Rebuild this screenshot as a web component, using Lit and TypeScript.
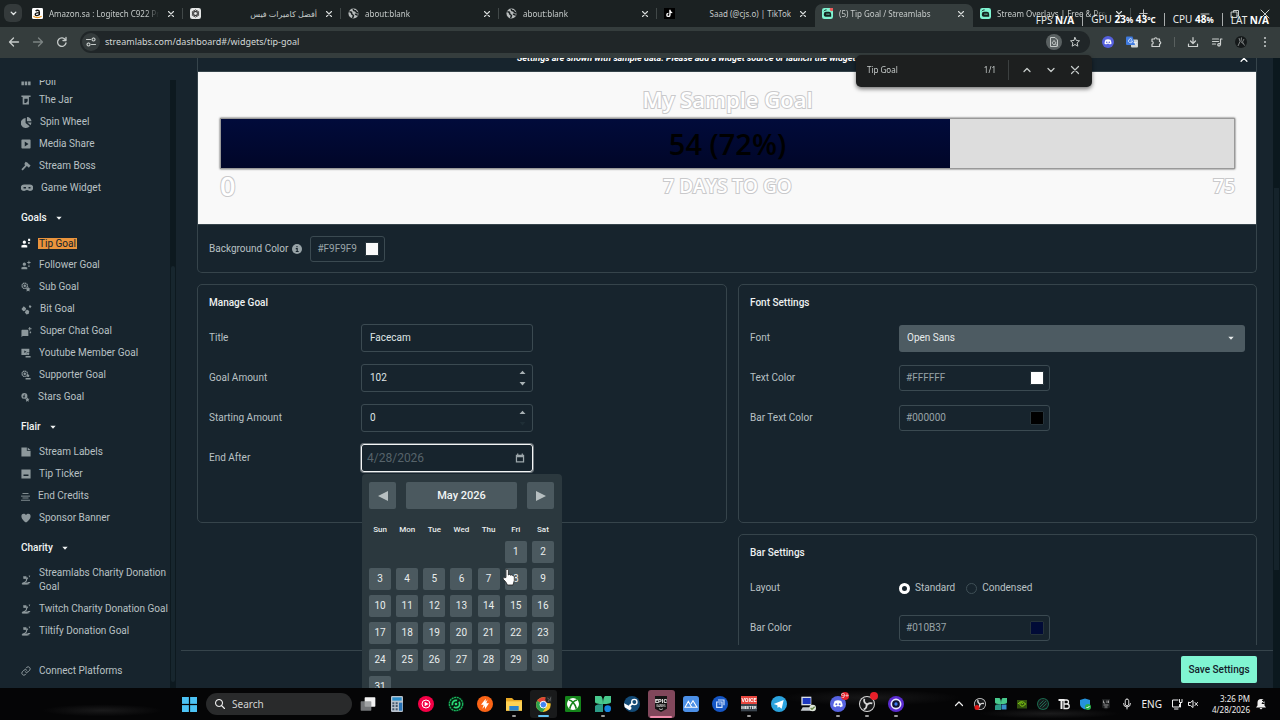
import { LitElement, html, svg, css, nothing } from "lit";
import { customElement } from "lit/decorators.js";
import { classMap } from "lit/directives/class-map.js";
import { styleMap } from "lit/directives/style-map.js";

const icon = (body: unknown, w = 12, h = w, box = 24) =>
  html`<svg class="ic" width=${w} height=${h} viewBox="0 0 ${box} ${(box * h) / w}" aria-hidden="true">${body}</svg>`;

const line = (d: string, width = 2) =>
  svg`<path d=${d} fill="none" stroke="currentColor" stroke-width=${width} stroke-linecap="round" stroke-linejoin="round"/>`;
const solid = (d: string) => svg`<path d=${d} fill="currentColor"/>`;

const closeGlyph = line("M6 6 18 18M18 6 6 18", 2.6);

const base = css`
  :host, * { box-sizing: border-box; }
  button, input, select { font: inherit; color: inherit; margin: 0; padding: 0; border: 0; background: none; min-width: 0; outline: 0; }
  button { display: grid; place-items: center; cursor: pointer; }
  a { color: inherit; text-decoration: none; }
  .ic { display: block; flex: none; }
`;

/* ---------- browser tabs, toolbar and find bar ---------- */

const globe = svg`<circle cx="12" cy="12" r="11" fill="#b9bdbd"/><path d="M3 8c4 0 5 1 5 4s3 2 4 5l-2 5M12 2c-1 3 1 4 4 4 2 1 1 4 4 4 2 1 3 0 3 0M15 14c3-1 5 0 5 3" fill="none" stroke="#1c2223" stroke-width="3.4"/>`;
const streamlabs = svg`<rect width="24" height="24" rx="5" fill="#80f5d2"/><path d="M9 8h6a5 5 0 0 1 5 5v6H8a4 4 0 0 1-4-4v-2a5 5 0 0 1 5-5Z" fill="#14231f"/><path d="M4 7c1-2 3-3 6-3" stroke="#14231f" stroke-width="2" fill="none"/><path d="M11 12v3M15 12v3" stroke="#80f5d2" stroke-width="2"/>`;

const tabs = [
  { title: "Amazon.sa : Logitech C922 Pro", fav: svg`<rect width="24" height="24" rx="3" fill="#fff"/><path d="M8 7c2-3 8-3 8 2v7M16 10c-6 0-9 1-9 4s6 4 9 0" fill="none" stroke="#111" stroke-width="3"/><path d="M3 18c6 4 12 4 18 0" fill="none" stroke="#f09a20" stroke-width="2.6"/>` },
  { title: "أفضل كاميرات فيس", rtl: true, fav: svg`<rect width="24" height="24" rx="5" fill="#e4e6e6"/><g fill="none" stroke="#222" stroke-width="1.5"><ellipse cx="12" cy="12" rx="4" ry="8"/><ellipse cx="12" cy="12" rx="4" ry="8" transform="rotate(60 12 12)"/><ellipse cx="12" cy="12" rx="4" ry="8" transform="rotate(120 12 12)"/></g>` },
  { title: "about:blank", fav: globe },
  { title: "about:blank", fav: globe },
  { title: "Saad (@cjs.o) | TikTok", end: true, fav: svg`<rect width="24" height="24" fill="#000"/><path d="M13 4v11a3.4 3.4 0 1 1-3.400-3.400M13 5c0 3 2 5 5 5" fill="none" stroke="#fff" stroke-width="3"/>` },
  { title: "(5) Tip Goal / Streamlabs", active: true, fav: svg`${streamlabs}<circle cx="21" cy="3" r="4" fill="#ee5b5b"/>` },
  { title: "Stream Overlays | Free & Premium", fav: streamlabs },
];

@customElement("browser-frame")
class BrowserFrame extends LitElement {
  static styles = [base, css`
    :host { display: block; position: relative; z-index: 10; color: #c6cbca; font: 8px/14px "Noto Sans", "DejaVu Sans", sans-serif; }
    .strip { display: flex; height: 27px; background: #1b2122; align-items: stretch; }
    .search-tabs { width: 18px; height: 18px; margin: 4px 3px 0 4px; border-radius: 6px; background: #343a3b; color: #e3e6e6; }
    .tab { flex: 0 1 158px; min-width: 0; display: flex; align-items: center; gap: 6px; padding: 0 6px 0 7px; position: relative; }
    .tab::after { content: ""; position: absolute; right: 0; top: 8px; height: 11px; width: 1px; background: #414848; }
    .tab.active { background: #353d3d; border-radius: 7px 7px 0 0; margin-top: 4px; padding-bottom: 4px; }
    .tab.active::after, .tab.quiet::after { display: none; }
    .name { flex: 1; overflow: hidden; white-space: nowrap; text-align: left; display: block; mask-image: linear-gradient(90deg, #000 88%, transparent); }
    .name.end { text-align: right; mask-image: none; }
    .x { width: 12px; height: 12px; color: #d8dcdb; }
    .plus { width: 24px; }
    .win { display: flex; margin-left: auto; gap: 18px; padding-right: 9px; align-items: center; }
    .bar { display: flex; align-items: center; height: 31px; background: #353d3d; padding: 0 9px 2px 8px; }
    .nav { display: flex; gap: 12px; margin-right: 12px; }
    .dim { color: #7c8483; }
    .omni { flex: 1; display: flex; align-items: center; height: 22px; border-radius: 11px; background: #202628; padding: 0 9px 0 2px; gap: 5px; }
    .info { width: 18px; height: 18px; border-radius: 9px; background: #343b3c; }
    .omni input { flex: 1; font-size: 9px; color: #d3d8d7; }
    .lens { width: 16px; height: 16px; border-radius: 8px; background: #5a6162; margin-right: 2px; }
    .tools { display: flex; align-items: center; gap: 12px; padding-left: 12px; color: #cdd1d0; }
    .rule { width: 1px; height: 10px; background: #59605f; }
    .find { position: absolute; right: 188px; top: 55px; width: 236px; height: 32px; display: flex; align-items: center; gap: 12px; padding: 0 11px 2px; border-radius: 5px; background: #1d1f1f; box-shadow: 0 2px 4px #0008; }
    .find input { flex: 1; }
    .find .sep { width: 1px; height: 20px; background: #3c4040; }
    .perf { position: absolute; top: 11px; right: 11px; display: flex; align-items: center; gap: 8px; font: 10px/16px "Noto Sans", sans-serif; color: #e9eceb; pointer-events: none; }
    .perf b { color: #fff; font-weight: 700; }
    .perf small { font-size: 8px; }
    .perf i { width: 1px; height: 13px; background: #a9adad; }
  `];
  render() {
    return html`
      <div class="strip">
        <button class="search-tabs" aria-label="Search tabs">${icon(line("M7 9l5 5 5-5", 3), 11)}</button>
        ${tabs.map((t, i) => html`
          <div class=${classMap({ tab: true, active: !!t.active, quiet: i === 4 })}>
            ${icon(t.fav, 11)}
            <button class=${classMap({ name: true, end: !!(t.end || t.rtl) })} dir=${t.rtl ? "auto" : nothing} title=${t.title}>${t.title}</button>
            <button class="x" aria-label="Close tab">${icon(closeGlyph, 10)}</button>
          </div>`)}
        <button class="plus" aria-label="New tab">${icon(line("M12 4v16M4 12h16"), 11)}</button>
        <div class="win">
          <button aria-label="Minimize">${icon(line("M4 12h16"), 12)}</button>
          <button aria-label="Restore">${icon(line("M5 8h11v11H5zM9 8V5h10v11h-3"), 12)}</button>
          <button aria-label="Close">${icon(line("M4 4 20 20M20 4 4 20"), 12)}</button>
        </div>
      </div>
      <div class="bar">
        <div class="nav">
          <button aria-label="Back">${icon(line("M21 12H4M11 4l-8 8 8 8", 2.6), 12)}</button>
          <button class="dim" aria-label="Forward">${icon(line("M3 12h17M13 4l8 8-8 8", 2.6), 12)}</button>
          <button aria-label="Reload">${icon(line("M19 8a8.500 8.500 0 1 0 1 6M20 3v6h-6", 2.6), 12)}</button>
        </div>
        <div class="omni">
          <button class="info" aria-label="Site information">${icon(line("M3 7h8M13 17h8M17 4a3 3 0 1 0 .1 0M7 14a3 3 0 1 0 .1 0", 2.4), 12)}</button>
          <input aria-label="Address" value="streamlabs.com/dashboard#/widgets/tip-goal">
          <button class="lens" aria-label="Find in page">${icon(line("M17 21H5V3h9l5 5v12M12 10a3.500 3.500 0 1 0 .1 0M15 16l4 4"), 12)}</button>
          <button aria-label="Bookmark">${icon(line("M12 3l2.700 6 6.300.6-4.800 4.300 1.500 6.500L12 17l-5.700 3.400 1.500-6.500L3 9.600 9.300 9z"), 12)}</button>
        </div>
        <div class="tools">
          ${icon(svg`<circle cx="12" cy="12" r="12" fill="#5560dd"/><path d="M7 7.500q5-2 10 0 2 4 2 8l-3.500 1.500-1-1.500h-5L8.500 17 5 15.500q0-4 2-8" fill="#fff"/><circle cx="9.500" cy="12.500" r="1.500" fill="#5560dd"/><circle cx="14.500" cy="12.500" r="1.500" fill="#5560dd"/>`, 12)}
          ${icon(svg`<rect x="10" y="7" width="14" height="16" rx="2" fill="#cfd4d4"/><path d="M0 3q0-2 2-2h11l5 17H2q-2 0-2-2z" fill="#3f7be0"/><path d="M12 7a4 4 0 1 0 1 3H9M15 13h7M18 12c1 4 2 6 4 7" fill="none" stroke="#e8f0ff" stroke-width="1.600"/>`, 12)}
          ${icon(line("M5 6h4a2.500 2.500 0 0 1 5 0h5v5a2.500 2.500 0 0 1 0 5v5H4v-5a2.500 2.500 0 0 0 0-5V6z", 2.400), 12)}
          <span class="rule"></span>
          ${icon(line("M12 3v12M7 10l5 5 5-5M3 16v5h18v-5", 2.400), 12)}
          ${icon(line("M3 6h12M3 11h12M3 16h6M19 17V6h3M16 15a2.500 2.500 0 1 0 .1 0", 2.400), 12)}
          ${icon(svg`<circle cx="12" cy="12" r="12" fill="#15191a"/><path d="M8 4l2 7-4 9M13 3l-1 8 3 4M18 6l-3 6 4 7" stroke="#8a8f8e" stroke-width="1.800" fill="none"/>`, 12)}
          ${icon(svg`<g fill="currentColor"><circle cx="12" cy="4" r="2"/><circle cx="12" cy="12" r="2"/><circle cx="12" cy="20" r="2"/></g>`, 12)}
        </div>
      </div>
      <div class="perf"><span>FPS <b>N/A</b></span><i></i><span>GPU <b>23<small>%</small> 43<small>°C</small></b></span><i></i><span>CPU <b>48<small>%</small></b></span><i></i><span>LAT <b>N/A</b></span></div>
      <div class="find" role="search">
        <input aria-label="Find" value="Tip Goal"><span>1/1</span><span class="sep"></span>
        <button aria-label="Previous match">${icon(line("M6 15l6-6 6 6", 2.600), 12)}</button>
        <button aria-label="Next match">${icon(line("M6 9l6 6 6-6", 2.600), 12)}</button>
        <button aria-label="Close find bar">${icon(line("M5 5 19 19M19 5 5 19", 2.400), 12)}</button>
      </div>`;
  }
}

/* ---------- widget navigation ---------- */

const charityArt = svg`${line("M6 7h10l-3 4v3M4 20c4 0 5-3 8-5M3 21h16M17 18h4", 2.600)}${solid("M5 3h8v6H7zM18 2l4-1-1 5zM4 18h12v5H3z")}`;
const supporterArt = svg`<circle cx="9" cy="9" r="6.500" fill="none" stroke="currentColor" stroke-width="3" stroke-dasharray="4 1"/><circle cx="9" cy="9" r="3" fill="currentColor"/>`;
const star = "M17 11l1.800 4 4.200.5-3 3 .8 4.500-3.800-2-3.800 2 .8-4.500-3-3 4.200-.5z";
const bust = "M17 11a3 3 0 1 1 0 6 3 3 0 0 1 0-6M11 23v-4h12v4z";

type Item = { label: string; art: unknown; w?: number; on?: boolean };
const widgets: Item[] = [
  { label: "The Jar", art: solid("M1 1h22v4h-4v18H4V5H1zM8 9v10h4l4-4V9z") },
  { label: "Spin Wheel", w: 11, art: solid("M10 2v11l9 7A11 11 0 1 1 10 2zM13 0c6 0 9 4 10 9H13zM14 12h9l-2 6z") },
  { label: "Media Share", art: svg`<path fill-rule="evenodd" fill="currentColor" d="M3 1h18q2 0 2 2v18q0 2-2 2H3q-2 0-2-2V3q0-2 2-2zm6 5v12l9-6z"/>` },
  { label: "Stream Boss", art: solid("M11 2l5 2 3 4 4 2-4 6-5-4L4 23l-3-3 9-10-2-3z") },
  { label: "Game Widget", w: 12, art: svg`<path fill-rule="evenodd" fill="currentColor" d="M6 5h12a6 6 0 0 1 0 13c-3 0-3-2-6-2s-3 2-6 2A6 6 0 0 1 6 5zm-1 5v3h5v-3zm10 0v3h4v-3z"/>` },
];
const goals: Item[] = [
  { label: "Tip Goal", on: true, art: solid("M8 6a4 4 0 1 1 0 8 4 4 0 0 1 0-8M1 23v-5q7-4 14 0v5zM17 2h5v5h-5zM17 10h4v4h-4z") },
  { label: "Follower Goal", art: solid("M8 6a4 4 0 1 1 0 8 4 4 0 0 1 0-8M1 22v-4q7-4 14 0v4zM18 2h2v3h3v2h-3v3h-2V7h-3V5h3zM17 13h4v3h-4z") },
  { label: "Sub Goal", art: svg`${supporterArt}${solid(star)}` },
  { label: "Bit Goal", w: 11, art: solid("M6 5l5 4-1 5-5 2-4-5zM13 12l5 3-1 6-5 2-4-5zM19 2l4 3-3 4-3-3z") },
  { label: "Super Chat Goal", w: 11, art: solid("M2 8h12q2 0 2 2v12H4l-3 2V10zM18 2h2v3h3v2h-3v3h-2V7h-2V5h2zM19 12h3v4h-3z") },
  { label: "Youtube Member Goal", art: svg`${solid("M1 2h19v8h-6v7H1zM8 6v6l5-3z")}${solid(bust)}` },
  { label: "Supporter Goal", art: svg`${supporterArt}${solid(bust)}` },
  { label: "Stars Goal", w: 9, art: svg`<circle cx="9" cy="8" r="8" fill="currentColor"/><path d="M11 4q-3 0-3 4v7M5 9h6" fill="none" stroke="#17242d" stroke-width="2"/>${solid(star)}` },
];
const flair: Item[] = [
  { label: "Stream Labels", art: solid("M1 1h13v8h9v14H1zM16 1l7 6h-7z") },
  { label: "Tip Ticker", art: svg`<path fill-rule="evenodd" fill="currentColor" d="M1 1h22v22H1zm5 12v4h12v-4z"/>` },
  { label: "End Credits", w: 9, art: line("M5 4h14M1 11h22M5 16h14M1 22h22", 2.400) },
  { label: "Sponsor Banner", art: solid("M12 23C3 16 1 12 1 7c0-6 8-7 11-2 3-5 11-4 11 2 0 5-2 9-11 16z") },
];
const charity: Item[] = [
  { label: "Streamlabs Charity Donation Goal", art: charityArt },
  { label: "Twitch Charity Donation Goal", art: charityArt },
  { label: "Tiltify Donation Goal", art: charityArt },
];

@customElement("widget-nav")
class WidgetNav extends LitElement {
  static styles = [base, css`
    :host { display: flex; width: 181px; flex: none; padding: 22px 5px 0 0; overflow: hidden; color: #b9c1c4; font: 10px/14px Roboto, sans-serif; }
    nav { flex: 1; overflow: hidden; padding-left: 21px; }
    .row { display: flex; align-items: center; gap: 8px; min-height: 22px; padding: 4px 0; color: #b9c1c4; }
    .row .ic { color: #8d989c; }
    .row.on .ic { color: #fff; }
    .row.on span { background: #ea943c; color: #10202a; padding: 0 1px; margin-left: -1px; line-height: 11px; }
    .row.cut { height: 9px; min-height: 0; overflow: hidden; align-items: flex-end; padding: 0; }
    .head { display: flex; align-items: center; gap: 8px; height: 22px; margin: 8px 0 3px; color: #f1f4f4; font-weight: 500; }
    .row.connect { margin-top: 18px; }
    .rail { width: 6px; background: #0d191f; padding: 186px 1px 6px; }
    .thumb { height: 100%; background: #17262e; border-radius: 2px; }
  `];
  row(i: Item) {
    return html`<a class=${classMap({ row: true, on: !!i.on })} href="#">${icon(i.art, i.w ?? 10)}<span>${i.label}</span></a>`;
  }
  group(name: string, items: Item[]) {
    return html`<button class="head" aria-expanded="true">${name}${icon(solid("M4 8h16l-8 9z"), 8)}</button>${items.map((i) => this.row(i))}`;
  }
  render() {
    return html`
      <nav aria-label="Widgets">
        <a class="row cut" href="#">${icon(solid("M1 6h6v9H1zM9 6h6v9H9zM17 6h6v9h-6z"), 10)}<span>Poll</span></a>
        ${widgets.map((i) => this.row(i))}
        ${this.group("Goals", goals)}
        ${this.group("Flair", flair)}
        ${this.group("Charity", charity)}
        <a class="row connect" href="#">${icon(line("M10 14a5 5 0 0 0 7 0l4-4a5 5 0 0 0-7-7l-2 2M14 10a5 5 0 0 0-7 0l-4 4a5 5 0 0 0 7 7l2-2", 2.400), 10)}<span>Connect Platforms</span></a>
      </nav>
      <div class="rail"><div class="thumb"></div></div>`;
  }
}

/* ---------- goal editor ---------- */

@customElement("goal-editor")
class GoalEditor extends LitElement {
  static styles = [base, css`
    :host { display: flex; flex: 1; min-width: 0; overflow: hidden; color: #b9c1c4; font: 10px/14px Roboto, sans-serif; }
    main { flex: 1; min-width: 0; height: 100%; overflow: hidden; }
    .rail { width: 7px; background: #0b181e; padding: 130px 1px 118px; }
    .thumb { height: 100%; background: #15232b; }
    .page { padding: 0 16px; display: grid; grid-template-columns: 530fr 519fr; gap: 11px; }
    .card { border: 1px solid #36444b; border-radius: 5px; padding: 11px 11px 0; }
    .preview { grid-column: 1 / -1; padding: 0; border-top: 0; border-radius: 0 0 5px 5px; }
    .notice { height: 14px; display: flex; align-items: flex-end; overflow: hidden; padding: 0 7px 6px; color: #fff; border-bottom: 1px solid #36444b; }
    .notice p { flex: 1; margin: 0; text-align: center; font-size: 9px; font-weight: 700; font-style: italic; line-height: 14px; }
    .stage { background: #f9f9f9; padding: 12px 21px 24px 22px; font-family: "Open Sans", sans-serif; font-weight: 600; text-align: center; color: #fff; border-bottom: 1px solid #36444b; }
    .outline { -webkit-text-stroke: 2px #c9c9cb; paint-order: stroke fill; }
    .goal-name { font-size: 22px; line-height: 31px; height: 34px; }
    .track { display: grid; height: 51px; background: #ddd; border: 1px solid #999; box-shadow: 0 0 2px #444; }
    .fill { grid-area: 1 / 1; background: linear-gradient(#010b3b, #010628); }
    .amount { grid-area: 1 / 1; place-self: center; color: #000; font-size: 29px; line-height: 40px; }
    .ends { display: grid; grid-template-columns: 1fr auto 1fr; font-size: 19px; line-height: 34px; height: 31px; }
    .ends .zero { text-align: left; font-size: 27px; }
    .ends .max { text-align: right; }
    .bg { display: flex; align-items: center; height: 47px; padding: 0 11px; }
    .bg .ic { margin: 0 8px 0 4px; color: #98a3a7; }
    h2 { margin: 0 0 8px; font-size: 10px; line-height: 14px; font-weight: 500; color: #eef1f1; }
    .field { display: flex; align-items: center; height: 40px; }
    .field > .lab { width: 152px; flex: none; }
    .right .field > .lab { width: 149px; }
    .box { position: relative; display: flex; align-items: center; width: 172px; height: 28px; border: 1px solid #3b4a51; border-radius: 3px; padding: 0 5px 0 8px; color: #dfe4e5; }
    .box input { flex: 1; width: 100%; appearance: textfield; }
    input::-webkit-inner-spin-button { appearance: none; }
    .steps { display: grid; gap: 2px; color: #a9b2b5; }
    .steps button { height: 9px; }
    .steps .off { color: #1f2e36; }
    .date { border-color: #f4f6f6; box-shadow: 0 0 0 1px #f4f6f666; padding: 0 7px 0 5px; font-size: 12px; }
    .date input::placeholder { color: #56636a; opacity: 1; }
    .date > .ic { color: #9da7ab; }
    .hex { width: 151px; height: 26px; padding: 0 5px 0 6px; color: #98a3a7; }
    .hex.small { width: 75px; }
    .hex .sw { flex: none; width: 14px; height: 14px; appearance: none; border-radius: 1px; cursor: pointer; }
    .sw::-webkit-color-swatch-wrapper { padding: 0; }
    .sw::-webkit-color-swatch { border: 1px solid #26333a; border-radius: 1px; }
    .pick { flex: 1; display: grid; }
    .pick select { grid-area: 1 / 1; appearance: none; height: 27px; border-radius: 3px; background: #4d5b62; color: #e8ecec; padding: 0 8px; }
    .pick .ic { grid-area: 1 / 1; place-self: center end; margin-right: 10px; color: #e8ecec; pointer-events: none; }
    .manage { padding-bottom: 44px; }
    .bars { grid-column: 2; padding-bottom: 120px; }
    .opt { display: flex; align-items: center; gap: 5px; margin-right: 11px; }
    .opt input { appearance: none; width: 11px; height: 11px; border: 1px solid #3f4f56; border-radius: 50%; }
    .opt input:checked { border: 3px solid #fff; }
    .actions { position: sticky; bottom: 0; z-index: 1; background: #17242d; padding-top: 5px; }
    .actions div { display: flex; justify-content: flex-end; border-top: 1px solid #36444b; padding: 5px 16px 5px; }
    .save { background: #80f5d2; color: #12202a; width: 76px; height: 27px; border-radius: 2px; font-weight: 500; }
    .cal { position: absolute; left: 0; top: 29px; z-index: 3; width: 200px; padding: 8px 8px 12px 7px; border-radius: 4px 4px 0 0; background: #2b383e; color: #e9eded; font-size: 10px; }
    .top { display: flex; gap: 10px; height: 27px; }
    .top button { width: 27px; background: #4b595f; border-radius: 2px; color: #b7bfc1; }
    .top .month { flex: 1; font-size: 11px; font-weight: 500; color: #f2f5f5; }
    .days { display: grid; grid-template-columns: repeat(7, 22px); justify-content: space-between; gap: 5px 0; margin-top: 15px; }
    .days span { text-align: center; font-size: 8px; line-height: 12px; margin: 0 -4px; font-weight: 500; }
    .days button { height: 22px; border-radius: 2px; background: #4b595f; }
    .days .first { grid-column: 6; }
    .hand { position: absolute; left: 140px; top: 94px; pointer-events: none; }
  `];
  hex(id: string, label: string, value: string, small = false) {
    return html`<div class=${classMap({ box: true, hex: true, small })}><input id=${id} value=${value}><input class="sw" type="color" aria-label="${label} swatch" value=${value.toLowerCase()}></div>`;
  }
  num(id: string, label: string, value: number) {
    return html`<div class="field"><label class="lab" for=${id}>${label}</label>
      <div class="box"><input id=${id} type="number" min="0" value=${value}>
        <div class="steps"><button aria-label="Increase">${icon(solid("M4 16h16l-8-9z"), 9)}</button>
        <button class=${value ? "" : "off"} aria-label="Decrease">${icon(solid("M4 8h16l-8 9z"), 9)}</button></div></div></div>`;
  }
  render() {
    const raised = 54, target = 75;
    const share = (raised / target) * 100;
    return html`
      <main><div class="inner">
        <div class="page">
          <section class="card preview">
            <div class="notice"><p>Settings are shown with sample data. Please add a widget source or launch the widget to view your data.</p><button aria-label="Dismiss">${icon(line("M5 15l7-7 7 7", 3), 10)}</button></div>
            <div class="stage">
              <div class="goal-name outline">My Sample Goal</div>
              <div class="track"><div class="fill" style=${styleMap({ width: `${share}%` })}></div><div class="amount">${raised} (${share}%)</div></div>
              <div class="ends outline"><span class="zero">0</span><span>7 DAYS TO GO</span><span class="max">${target}</span></div>
            </div>
            <div class="bg"><label for="bg">Background Color</label>
              ${icon(svg`<circle cx="12" cy="12" r="12" fill="currentColor"/><path d="M12 5v3M9 11h3.500v7M9 18h7" stroke="#17242d" stroke-width="2.600" fill="none"/>`, 10)}
              ${this.hex("bg", "Background Color", "#F9F9F9", true)}</div>
          </section>
          <section class="card manage">
            <h2>Manage Goal</h2>
            <div class="field"><label class="lab" for="title">Title</label><div class="box"><input id="title" value="Facecam"></div></div>
            ${this.num("goal", "Goal Amount", 102)}
            ${this.num("start", "Starting Amount", 0)}
            <div class="field"><label class="lab" for="end">End After</label>
              <div class="box date"><input id="end" placeholder="4/28/2026">
                ${icon(svg`<path fill-rule="evenodd" fill="currentColor" d="M2 4h3V1h3v3h8V1h3v3h3v19H2zm3 6v10h14V10z"/>`, 10)}
                ${this.calendar()}</div></div>
          </section>
          <section class="card right">
            <h2>Font Settings</h2>
            <div class="field"><label class="lab" for="font">Font</label><div class="pick"><select id="font"><option>Open Sans</option></select>${icon(solid("M4 8h16l-8 9z"), 8)}</div></div>
            <div class="field"><label class="lab" for="tc">Text Color</label>${this.hex("tc", "Text Color", "#FFFFFF")}</div>
            <div class="field"><label class="lab" for="btc">Bar Text Color</label>${this.hex("btc", "Bar Text Color", "#000000")}</div>
          </section>
          <section class="card right bars">
            <h2>Bar Settings</h2>
            <div class="field" role="radiogroup" aria-label="Layout"><span class="lab">Layout</span>
              <label class="opt"><input type="radio" name="layout" checked>Standard</label>
              <label class="opt"><input type="radio" name="layout">Condensed</label></div>
            <div class="field"><label class="lab" for="bc">Bar Color</label>${this.hex("bc", "Bar Color", "#010B37")}</div>
          </section>
        </div>
        <div class="actions"><div><button class="save">Save Settings</button></div></div>
      </div></main>
      <div class="rail"><div class="thumb"></div></div>`;
  }
  calendar() {
    return html`
      <div class="cal">
        <div class="top"><button aria-label="Previous month">${icon(solid("M2 12 22 2v20z"), 12)}</button><button class="month">May 2026</button><button aria-label="Next month">${icon(solid("M22 12 2 2v20z"), 12)}</button></div>
        <div class="days">
          ${["Sun", "Mon", "Tue", "Wed", "Thu", "Fri", "Sat"].map((d) => html`<span>${d}</span>`)}
          ${Array.from({ length: 31 }, (_, i) => html`<button class=${i ? "" : "first"}>${i + 1}</button>`)}
        </div>
        <svg class="hand" width="14" height="18" viewBox="0 0 14 18" aria-hidden="true"><path d="M4 9.500V2.500a1.200 1.200 0 0 1 2.400 0V7l1-.6 1.200.8 1.300-.4 1 1 1.400.2V12.500L11 17H5.500L3.500 13.500 1 11q0-1.800 1.600-1.300z" fill="#fff" stroke="#222" stroke-width=".8"/></svg>
      </div>`;
  }
}

/* ---------- desktop taskbar ---------- */

const round = (fill: string, inner: unknown) => svg`<circle cx="12" cy="12" r="12" fill=${fill}/>${inner}`;
const ink = (d: string, c = "#fff", w = 2) => svg`<path d=${d} fill="none" stroke=${c} stroke-width=${w}/>`;
const obs = round("#d8d8d8", svg`<circle cx="12" cy="12" r="10.500" fill="#17181a"/>${ink("M8 4c-1 4 1 7 4 8M20 11c-4-1-7 0-8 3M7 20c4-1 5-4 4-8", "#d8d8d8", 2.600)}`);
const discord = round("#5662e0", svg`<path d="M7 7.500q5-2 10 0 2 4 2 8l-3.500 1.500-1-1.500h-5L8.500 17 5 15.500q0-4 2-8" fill="#fff"/><circle cx="9.500" cy="12.500" r="1.500" fill="#5662e0"/><circle cx="14.500" cy="12.500" r="1.500" fill="#5662e0"/>`);
const clover = svg`<path d="M0 0h9q3 2 3 12Q0 12 0 9zM24 0h-9q-3 2-3 12 12 0 12-3z" fill="#48c98c"/><path d="M0 24V15q2-3 12-3v12z" fill="#2c9b86"/>`;

type App = { name: string; art: unknown; run?: boolean; hot?: string; badge?: string };
const apps: App[] = [
  { name: "Task view", art: svg`<rect x="7" y="2" width="16" height="14" rx="1" fill="#f2f2f2"/><rect x="1" y="8" width="16" height="14" rx="1" fill="#8d8f92d0"/>` },
  { name: "Calculator", art: svg`<rect x="3" y="0" width="18" height="24" rx="2" fill="#b9c2cc"/><rect x="5" y="2" width="14" height="5" fill="#2c8fcb"/>${ink("M5 11h3M10 11h3M5 15h3M10 15h3M5 20h3M10 20h3", "#46596d", 3)}<path d="M15 10h5v12h-5z" fill="#2672b6"/>` },
  { name: "YouTube Music", art: round("#f50046", svg`<circle cx="12" cy="12" r="6" fill="none" stroke="#fff" stroke-width="1.500"/><path d="M10 8.500v7l6-3.500z" fill="#fff"/>`) },
  { name: "Cleaner", art: round("#061a0e", svg`<circle cx="12" cy="12" r="10" fill="none" stroke="#18b45c" stroke-width="2" stroke-dasharray="3 1"/><circle cx="12" cy="12" r="5.500" fill="none" stroke="#2adb78" stroke-width="2.600" stroke-dasharray="12 3"/><circle cx="12" cy="12" r="2" fill="#2adb78"/>`) },
  { name: "Bolt", art: round("#fb6416", svg`<path d="M13 4l-7 9h4l-2 6 4-4 1-4zM12 20l6-9h-4l2-6-4 5z" fill="#fff"/>`) },
  { name: "File Explorer", run: true, art: svg`<path d="M0 3h9l3 3h12v16H0z" fill="#e9a825"/><path d="M0 8h24v14H0z" fill="#ffd255"/><path d="M5 15h14v7H5z" fill="#2a83cf"/>` },
  { name: "Chrome", hot: "#191a1b", art: svg`<circle cx="11" cy="13" r="11" fill="#f6c52c"/><path d="M11 13 2 7a11 11 0 0 1 19 1z" fill="#e14436"/><path d="M11 13 2 7a11 11 0 0 0 8 17l5-7z" fill="#2da14f"/><circle cx="11" cy="13" r="5" fill="#4285f4" stroke="#fff" stroke-width="1.500"/><circle cx="20" cy="5" r="6" fill="#202324"/>${ink("M17 3l3 2-2 4M22 2l-1 6", "#777", 1)}` },
  { name: "Xbox", art: svg`<rect width="24" height="24" rx="2" fill="#14841a"/><circle cx="12" cy="12" r="9" fill="#fff"/>${ink("M6 6c5 1 9 6 11 13M18 6c-5 1-9 6-11 13", "#14841a", 2.600)}` },
  { name: "Clover", run: true, art: svg`${clover}<circle cx="19" cy="19" r="5" fill="#1584e0"/>` },
  { name: "Steam", art: round("#134a76", svg`<circle cx="15.500" cy="9" r="4" fill="none" stroke="#fff" stroke-width="2"/><path d="M0 11l8 4a3 3 0 1 1-2 5L1 17z" fill="#fff"/>${ink("M8 15l5-4", "#fff", 3)}`) },
  { name: "Epic Games", hot: "#81475b", art: svg`<path d="M3 0h18v19l-9 5-9-5z" fill="#151515"/><text x="12" y="11" text-anchor="middle" font-size="8.500" font-weight="700" fill="#fff" font-family="Roboto, sans-serif">EPIC</text><text x="12" y="16" text-anchor="middle" font-size="4" fill="#fff" font-family="Roboto, sans-serif">GAMES</text>${ink("M9 19l3 1.500 3-1.500", "#fff", 1)}` },
  { name: "Altitude", art: svg`<rect width="24" height="24" rx="4" fill="#4b8fe6"/>${ink("M3 17l5-9 5 9zM12 12l3-5 6 10h-8", "#fff", 1.600)}` },
  { name: "Phone link", art: round("#1556c4", svg`${ink("M7 9h8v8H7zM9 6h9v8M10 12h3", "#cfe2ff", 1.800)}`) },
  { name: "Voicemeeter", run: true, art: svg`<rect x="0" y="0" width="24" height="12" fill="#e8473f"/><rect y="12" width="24" height="11" fill="#39434c"/><text x="12" y="9" text-anchor="middle" font-size="8" font-weight="700" fill="#fff" font-family="Roboto, sans-serif">VOICE</text><text x="12" y="20" text-anchor="middle" font-size="6" font-weight="700" fill="#fff" font-family="Roboto, sans-serif">MEETER</text>` },
  { name: "Telegram", art: round("#2ba3de", svg`<path d="M4 12 19 6l-3 13-4-3-2 2-.5-4z" fill="#fff"/>`) },
  { name: "Remote PC", art: svg`<path d="M2 1h15v13H2z" fill="#d9dfe8"/><path d="M4 3h12v9H4z" fill="#1c37c0"/><path d="M4 17h13l3 5H1z" fill="#c3c9cf"/><circle cx="19" cy="18" r="5" fill="#dfe6da"/>${ink("M16 18l2 2 4-4", "#6b8b4c")}` },
  { name: "Discord", run: true, badge: "9+", art: discord },
  { name: "OBS Studio", run: true, badge: "", art: obs },
  { name: "Recorder", run: true, art: round("#5a2bd0", svg`<circle cx="12" cy="12" r="7" fill="#0d1230" stroke="#e8e8ff" stroke-width="2.400"/><circle cx="12" cy="12" r="2.500" fill="#3d7af0"/>`) },
];
const tray: [string, unknown][] = [
  ["Show hidden icons", line("M5 15l7-7 7 7", 2.400)],
  ["OBS", svg`${obs}<circle cx="6" cy="19" r="5" fill="#e01818"/>`],
  ["Clover", svg`${clover}<path d="M13 13h10v10H13z" fill="#3a8fc8"/>`],
  ["Graphics", svg`<rect x="2" y="4" width="20" height="17" fill="#31520e"/>${ink("M4 12c4-6 11-6 15 0-4 6-10 5-11 1s3-5 6-1", "#8ad414", 2)}`],
  ["Guard", round("#1b6b50", svg`<circle cx="12" cy="12" r="10" fill="#15191b"/>${ink("M6 18 18 6M5 13l8-8M11 19l8-8", "#1f8060", 1.600)}`)],
  ["Audio", svg`<path d="M1 2h12v4H9v16H5V6H1z" fill="#eee"/>${ink("M12 4h5a4 4 0 0 1 0 8h-5zM12 12h6a4 4 0 0 1 0 9h-6z", "#eee", 2.600)}`],
  ["Security", svg`<path d="M12 1l10 3v8c0 6-5 9-10 11C7 21 2 18 2 12V4z" fill="#2592dc"/><circle cx="18" cy="18" r="6" fill="#2bb04a"/>${ink("M15 18l2 2 4-4")}`],
  ["Epic", svg`<path d="M4 2h16v17l-8 4-8-4z" fill="#1d1f20"/>${ink("M7 5v5h3M14 5v5M17 5v5M7 14h10M9 18h6", "#b8b8b8", 1.600)}`],
  ["Microphone", line("M12 2a3.500 3.500 0 0 0-3.500 3.500V12a3.500 3.500 0 0 0 7 0V5.500A3.500 3.500 0 0 0 12 2M5 11a7 7 0 0 0 14 0M12 18v4", 1.800)],
];

@customElement("task-bar")
class TaskBar extends LitElement {
  static styles = [base, css`
    :host { position: relative; z-index: 11; display: flex; align-items: center; height: 32px; flex: none; padding: 0 13px 0 181px; color: #f0f0f0; font: 10px/14px "Noto Sans", sans-serif;
      background: radial-gradient(ellipse 60px 6px at 8% 70%, #1a1a1b, transparent), radial-gradient(ellipse 90px 8px at 68% 30%, #171718, transparent), radial-gradient(ellipse 70px 5px at 82% 80%, #1b1b1c, transparent), #050506; }
    .start { width: 17px; height: 17px; margin-right: 8px; }
    .search { display: flex; align-items: center; gap: 6px; width: 146px; height: 22px; border-radius: 11px; background: #292a2b; padding: 0 8px; margin-right: 2px; }
    .search input { flex: 1; }
    .search input::placeholder { color: #d2d2d2; opacity: 1; }
    .apps { display: flex; justify-content: space-between; flex: 0 1 556px; }
    .app { position: relative; width: 27px; height: 28px; border-radius: 3px; }
    .app.run::after, .app.hot::after { content: ""; position: absolute; bottom: 1px; width: 4px; height: 2px; border-radius: 1px; background: #9c9c9c; }
    .app.hot::after { width: 11px; background: #64c4f5; }
    .app.epic::after { width: 22px; bottom: 0; background: #f08bab; }
    .badge { position: absolute; top: 2px; right: 2px; min-width: 8px; height: 8px; border-radius: 4px; background: #e8202a; font-size: 7px; line-height: 8px; }
    .tray { display: flex; align-items: center; margin-left: auto; gap: 9px; }
    .tray .sys { display: flex; gap: 4px; margin-right: 4px; }
    .clock { text-align: right; font-size: 8px; line-height: 11px; }
    .last { margin-left: -4px; }
  `];
  render() {
    return html`
      <button class="start" aria-label="Start">${icon(svg`<g fill="#4cc3f5"><rect width="11" height="11"/><rect x="13" width="11" height="11"/><rect y="13" width="11" height="11"/><rect x="13" y="13" width="11" height="11"/></g>`, 15)}</button>
      <label class="search">${icon(line("M10 3a7 7 0 1 0 .1 0M15 15l6 6", 2.200), 12)}<input placeholder="Search" aria-label="Search"></label>
      <div class="apps">
        ${apps.map((a) => html`<button class=${classMap({ app: true, run: !!a.run, hot: !!a.hot, epic: a.name === "Epic Games" })} style=${a.hot ? styleMap({ background: a.hot }) : nothing} aria-label=${a.name}>
          ${icon(a.art, 16)}${a.badge === undefined ? nothing : html`<span class="badge">${a.badge}</span>`}</button>`)}
      </div>
      <div class="tray">
        ${tray.map(([name, art]) => html`<button aria-label=${name}>${icon(art, 12)}</button>`)}
        <span>ENG</span>
        <div class="sys">${icon(line("M14 4H3v14h14v-5M7 22h7M17 3v6h5V3M19 9v9"), 12)}${icon(line("M3 9v6h4l5 4V5L7 9zM16 9l5 6M21 9l-5 6"), 12)}</div>
        <div class="clock"><div>3:26 PM</div><div>4/28/2026</div></div>
        <span class="last">${icon(svg`<path d="M12 2a7 7 0 0 0-7 7v6l-3 4h20l-3-4V9a7 7 0 0 0-7-7M9 20h6l-3 3z" fill="#f0f0f0"/>${ink("M14 5h5l-5 6h5", "#111", 2)}`, 12)}</span>
      </div>`;
  }
}

@customElement("app-root")
class AppRoot extends LitElement {
  static styles = css`
    :host { display: flex; flex-direction: column; height: 100vh; overflow: hidden; background: #17242d; }
    .body { flex: 1; min-height: 0; display: flex; }
  `;
  render() {
    return html`<browser-frame></browser-frame><div class="body"><widget-nav></widget-nav><goal-editor></goal-editor></div><task-bar></task-bar>`;
  }
}
